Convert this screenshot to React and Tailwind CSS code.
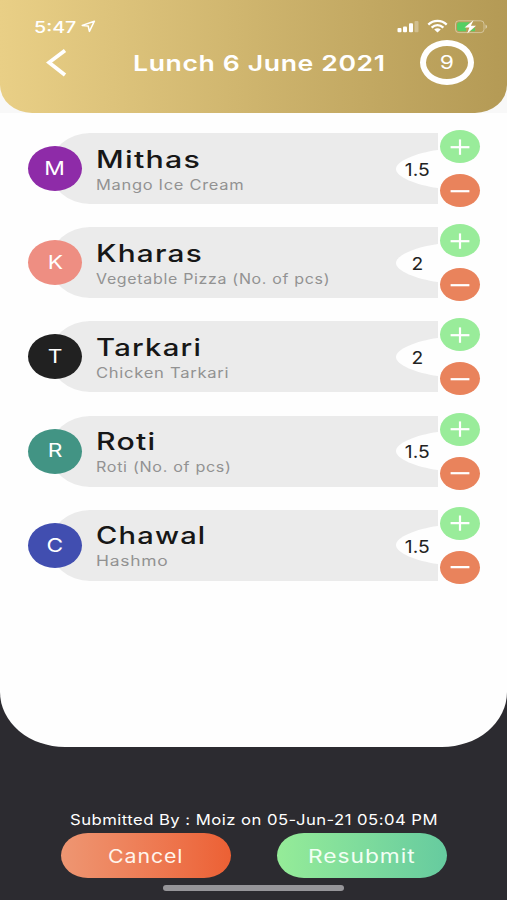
import React, { useState } from "react";

const dishes = [
  { letter: "M", color: "bg-[#8e2ba8]", title: "Mithas", detail: "Mango Ice Cream", qty: 1.5, titleFit: "scale-x-[1.265]", detailFit: "scale-x-[1.175]" },
  { letter: "K", color: "bg-[#ee8e82]", title: "Kharas", detail: "Vegetable Pizza (No. of pcs)", qty: 2, titleFit: "scale-x-[1.24]", detailFit: "scale-x-[1.14]" },
  { letter: "T", color: "bg-[#212121]", title: "Tarkari", detail: "Chicken Tarkari", qty: 2, titleFit: "scale-x-[1.22]", detailFit: "scale-x-[1.185]" },
  { letter: "R", color: "bg-[#429484]", title: "Roti", detail: "Roti (No. of pcs)", qty: 1.5, titleFit: "scale-x-[1.26]", detailFit: "scale-x-[1.15]" },
  { letter: "C", color: "bg-[#414eb0]", title: "Chawal", detail: "Hashmo", qty: 1.5, titleFit: "scale-x-[1.21]", detailFit: "scale-x-[1.245]" },
];

const StatusBar = () => (
  <div className="flex h-[39px] items-start justify-between pl-[34px] pr-[18px] pt-[17px]">
    <div className="flex items-start">
      <span className="w-[47px] whitespace-nowrap text-[16px] font-medium leading-[20px]">
        <span className="inline-block origin-left scale-x-[1.23]">5:47</span>
      </span>
      <svg className="mt-[3px] h-[13px] w-[15px]" viewBox="0 0 15 13" fill="none" stroke="currentColor" strokeWidth="1.5" strokeLinejoin="round">
        <path d="M1.2 5.4L13.4 1.2L8.4 11.4L7.2 6Z" />
      </svg>
    </div>
    <svg className="mt-[1px] h-[16px] w-[94px]" viewBox="0 0 94 16" fill="currentColor">
      <rect x="2.5" y="10" width="4" height="4.3" rx="1" />
      <rect x="8" y="8.6" width="4" height="5.7" rx="1" />
      <rect x="14" y="5.3" width="4" height="9" rx="1" />
      <rect x="19.5" y="3" width="4" height="11.3" rx="1" opacity="0.3" />
      <g fill="none" stroke="currentColor" strokeWidth="2.3">
        <path d="M33.3 6.6C38.5 1.5 46.5 1.5 51.7 6.6" />
        <path d="M36.6 9.6C40.2 6.4 44.8 6.4 48.4 9.6" />
      </g>
      <path d="M39.2 11.5Q42.5 9 45.8 11.5L42.5 14.5Z" />
      <rect x="60.5" y="2.8" width="28.5" height="11.8" rx="3.2" fill="none" stroke="currentColor" strokeWidth="1" opacity="0.4" />
      <path d="M90.5 6.5Q93.8 8.7 90.5 10.9Z" opacity="0.5" />
      <path d="M64.5 4.2H71V13.2H64.5Q62 13.2 62 11V6.4Q62 4.2 64.5 4.2Z" fill="#55cf63" />
      <path d="M71 4.2H75L71 8.2ZM75 13.2H80V9.5Z" fill="#55cf63" />
      <path d="M78.5 2.2L69.5 9.6H74.4L72.2 15.4L81 7.8H75.9Z" />
    </svg>
  </div>
);

const Header = () => (
  <div className="bg-[#f8f8f8]">
    <header className="h-[113px] rounded-b-[32px_28px] bg-linear-to-r from-[#e9cf86] to-[#b49a55] text-white">
      <StatusBar />
      <div className="flex h-[47px] items-center pl-[46px] pr-[33px]">
        <svg className="h-[30px] w-[22px]" viewBox="0 0 22 30" fill="none" stroke="currentColor" strokeWidth="3.8">
          <path d="M19 2.5L3 14.5L19 27" />
        </svg>
        <h1 className="ml-[65px] w-[253px] whitespace-nowrap text-[22px] font-semibold leading-[28px] tracking-[0.5px]">
          <span className="inline-block origin-left scale-x-[1.21]">Lunch 6 June 2021</span>
        </h1>
        <div className="ml-auto flex h-[45px] w-[54px] items-center justify-center rounded-[50%] border-[6.5px] border-white pt-[2px] text-[19px]">
          <span className="inline-block scale-x-[1.2]">9</span>
        </div>
      </div>
    </header>
  </div>
);

const RoundButton = ({ plus, onClick }) => (
  <button onClick={onClick} className={`flex h-[33px] w-[40px] items-center justify-center rounded-[50%] text-white ${plus ? "bg-[#99ec9a]" : "bg-[#e9835c]"}`}>
    <svg className="h-[18px] w-[20px]" viewBox="0 0 20 18" fill="none" stroke="currentColor" strokeWidth="2.2">
      <path d="M0.6 9.2H19.4" />
      {plus && <path d="M10 1.4V16.8" />}
    </svg>
  </button>
);

const DishRow = ({ dish }) => {
  const [qty, setQty] = useState(dish.qty);

  return (
    <div className="flex h-[77px] items-center pl-[28px]">
      <div className={`z-10 flex h-[45px] w-[54px] shrink-0 items-center justify-center rounded-[50%] pt-px text-[19px] text-white ${dish.color}`}>
        <span className="inline-block scale-x-[1.2]">{dish.letter}</span>
      </div>
      <div className="-ml-[32px] flex h-[71px] w-[388px] items-center justify-between rounded-l-[40px_35px] bg-[#ebebeb] pl-[46px]">
        <div className="flex flex-col whitespace-nowrap pt-[2px]">
          <h2 className="h-[30px] text-[24px] font-medium leading-[30px] tracking-[1px] text-[#171717]">
            <span className={`inline-block origin-left ${dish.titleFit}`}>{dish.title}</span>
          </h2>
          <p className="h-[20px] text-[14px] leading-[20px] tracking-[0.6px] text-[#929292]">
            <span className={`inline-block origin-left ${dish.detailFit}`}>{dish.detail}</span>
          </p>
        </div>
        <div className="relative flex h-[40px] w-[42px] items-center justify-center">
          <svg className="absolute inset-0 h-[40px] w-[42px]" viewBox="0 0 42 40" fill="#fefefe">
            <path d="M42 1C20 4 0 12 0 20C0 28 20 36 42 39Z" />
          </svg>
          <span className="relative inline-block scale-x-[1.1] pt-[3px] text-[17.5px] text-[#222222]">{qty}</span>
        </div>
      </div>
      <div className="ml-[2px] flex flex-col gap-[11px]">
        <RoundButton plus onClick={() => setQty(qty + 0.5)} />
        <RoundButton onClick={() => setQty(Math.max(0, qty - 0.5))} />
      </div>
    </div>
  );
};

export default function App() {
  return (
    <div className="flex h-[900px] w-[507px] flex-col overflow-hidden bg-[#2c2b30] font-['Inter',sans-serif]">
      <main className="h-[747px] shrink-0 overflow-hidden rounded-b-[65px_55px] bg-[#fefefe]">
        <Header />
        <div className="flex flex-col gap-[17.2px] pt-[17px]">
          {dishes.map((dish) => (
            <DishRow key={dish.title} dish={dish} />
          ))}
        </div>
      </main>
      <footer className="flex flex-1 flex-col items-center pt-[63px] text-white">
        <p className="h-[20px] whitespace-nowrap text-[14.5px] leading-[20px] tracking-[0.4px]">
          <span className="inline-block scale-x-[1.15]">Submitted By : Moiz on 05-Jun-21 05:04 PM</span>
        </p>
        <div className="mt-[3px] flex gap-[46px]">
          <button className="h-[45px] w-[170px] rounded-[27px/22.5px] bg-linear-to-r from-[#ee9672] to-[#ec6034] pt-[2px] text-[18.5px] tracking-[0.8px] text-[#fff4ec]">
            <span className="inline-block scale-x-[1.15]">Cancel</span>
          </button>
          <button className="h-[45px] w-[170px] rounded-[27px/22.5px] bg-linear-to-r from-[#95ec98] to-[#66cb9f] pt-[2px] text-[18.5px] tracking-[0.8px] text-[#f2fff4]">
            <span className="inline-block scale-x-[1.23]">Resubmit</span>
          </button>
        </div>
        <div className="mt-[7px] h-[6px] w-[181px] rounded-full bg-[#969599]" />
      </footer>
    </div>
  );
}
